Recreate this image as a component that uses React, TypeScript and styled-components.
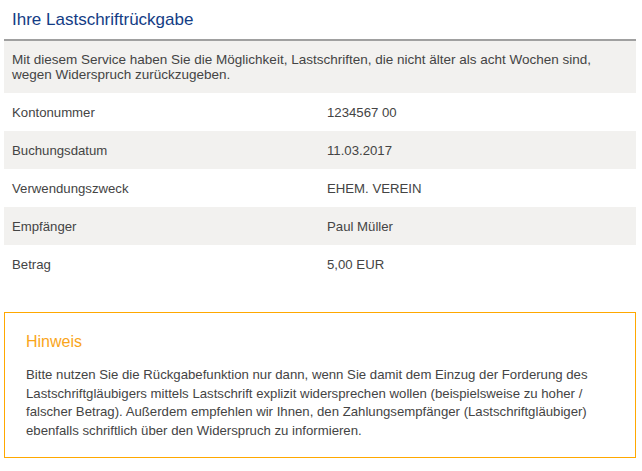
import styled, { createGlobalStyle } from "styled-components";

const GlobalStyle = createGlobalStyle`
    body {
        margin: 0;
        background: #fff;
        font-family: "Liberation Sans", Arial, sans-serif;
        color: #444;
    }
`;

const Page = styled.div`
    width: 632px;
    margin-left: 4px;
    padding-top: 9px;
`;

const Title = styled.h1`
    margin: 0;
    padding: 0 8px 9px;
    font-size: 17px;
    font-weight: normal;
    line-height: 21px;
    color: #133c85;
    border-bottom: 2px solid #a0a0a0;
`;

const Intro = styled.p`
    margin: 0;
    padding: 11px 8px 11px;
    background: #f2f1ef;
    font-size: 13.5px;
    line-height: 15px;
`;

const DetailList = styled.div`
    display: flex;
    flex-direction: column;
`;

const DetailRow = styled.div<{ $shaded: boolean }>`
    display: grid;
    grid-template-columns: 315px 1fr;
    align-items: center;
    height: 38px;
    padding: 0 8px;
    font-size: 13.2px;
    background: ${(p) => (p.$shaded ? "#f2f1ef" : "#fff")};
`;

const Notice = styled.section`
    margin-top: 29px;
    padding: 18px 21px 16px;
    border: 1px solid #ffa800;
`;

const NoticeTitle = styled.h2`
    margin: 0 0 13px;
    font-size: 16px;
    font-weight: normal;
    line-height: 22px;
    color: #f9a51a;
`;

const NoticeText = styled.p`
    margin: 0;
    font-size: 13.2px;
    line-height: 18.7px;
`;

const details = [
    ["Kontonummer", "1234567 00"],
    ["Buchungsdatum", "11.03.2017"],
    ["Verwendungszweck", "EHEM. VEREIN"],
    ["Empfänger", "Paul Müller"],
    ["Betrag", "5,00 EUR"],
];

function App() {
    return (
        <Page>
            <GlobalStyle />
            <Title>Ihre Lastschriftrückgabe</Title>
            <Intro>
                Mit diesem Service haben Sie die Möglichkeit, Lastschriften, die nicht älter als acht Wochen sind,
                <br />
                wegen Widerspruch zurückzugeben.
            </Intro>
            <DetailList>
                {details.map(([label, value], i) => (
                    <DetailRow key={label} $shaded={i % 2 === 1}>
                        <span>{label}</span>
                        <span>{value}</span>
                    </DetailRow>
                ))}
            </DetailList>
            <Notice>
                <NoticeTitle>Hinweis</NoticeTitle>
                <NoticeText>
                    Bitte nutzen Sie die Rückgabefunktion nur dann, wenn Sie damit dem Einzug der Forderung des
                    Lastschriftgläubigers mittels Lastschrift explizit widersprechen wollen (beispielsweise zu hoher /
                    falscher Betrag). Außerdem empfehlen wir Ihnen, den Zahlungsempfänger (Lastschriftgläubiger)
                    ebenfalls schriftlich über den Widerspruch zu informieren.
                </NoticeText>
            </Notice>
        </Page>
    );
}

export default App;
